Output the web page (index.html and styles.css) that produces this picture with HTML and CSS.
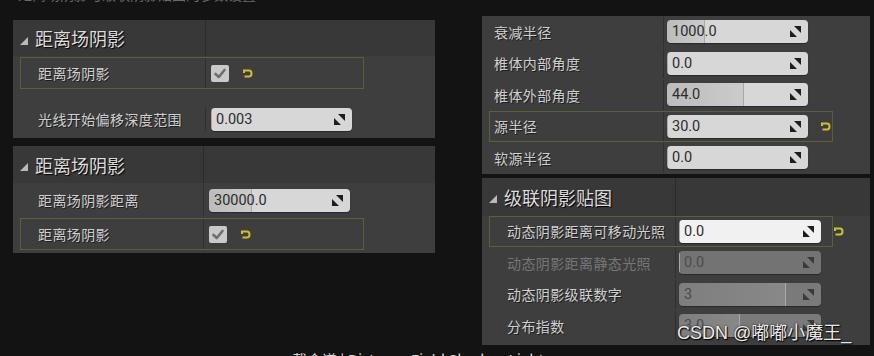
FILE: index.html
```html
<!DOCTYPE html>
<html lang="zh">
<head>
<meta charset="utf-8">
<title>距离场阴影</title>
<link rel="stylesheet" href="styles.css">
</head>
<body>
<div class="topcap"><span>距离场阴影与级联阴影贴图的参数设置</span></div>
<main class="layout">
  <section class="col col-left">
    <div class="panel pl1">
      <div class="hdr"><div class="hdr-name"><svg class="tri" width="8" height="8" viewBox="0 0 8 8"><polygon points="8,0 8,8 0,8"/></svg>距离场阴影</div></div>
      <div class="row">
        <div class="cell hl">
          <div class="lbl">距离场阴影</div>
          <div class="val">
            <span class="chk"><svg width="18" height="17" viewBox="0 0 18 17"><path d="M4.5 9 L7.8 12 L13.5 5" /></svg></span>
            <span class="reset"><svg width="11" height="11" viewBox="0 0 11 11"><path d="M2 5 V2.5 H7 Q9.5 2.5 9.5 5.5 Q9.5 8.5 7 8.5 H2.5"/></svg></span>
          </div>
        </div>
      </div>
      <div class="row row-tall">
        <div class="cell">
          <div class="lbl">光线开始偏移深度范围</div>
          <div class="val">
            <div class="num"><span class="num-t">0.003</span><svg class="spin" width="11" height="11" viewBox="0 0 11 11"><polygon points="4,0 11,0 11,7"/><polygon points="0,4 0,11 7,11"/></svg></div>
          </div>
        </div>
      </div>
    </div>

    <div class="panel pl2">
      <div class="hdr"><div class="hdr-name"><svg class="tri" width="8" height="8" viewBox="0 0 8 8"><polygon points="8,0 8,8 0,8"/></svg>距离场阴影</div></div>
      <div class="row">
        <div class="cell">
          <div class="lbl">距离场阴影距离</div>
          <div class="val">
            <div class="num" style="--fill:42px"><span class="num-t">30000.0</span><svg class="spin" width="11" height="11" viewBox="0 0 11 11"><polygon points="4,0 11,0 11,7"/><polygon points="0,4 0,11 7,11"/></svg></div>
          </div>
        </div>
      </div>
      <div class="row">
        <div class="cell hl">
          <div class="lbl">距离场阴影</div>
          <div class="val">
            <span class="chk"><svg width="18" height="17" viewBox="0 0 18 17"><path d="M4.5 9 L7.8 12 L13.5 5" /></svg></span>
            <span class="reset"><svg width="11" height="11" viewBox="0 0 11 11"><path d="M2 5 V2.5 H7 Q9.5 2.5 9.5 5.5 Q9.5 8.5 7 8.5 H2.5"/></svg></span>
          </div>
        </div>
      </div>
    </div>
  </section>

  <section class="col col-right">
    <div class="panel pr1">
      <div class="row">
        <div class="cell">
          <div class="lbl">衰减半径</div>
          <div class="val"><div class="num" style="--fill:37px"><span class="num-t">1000.0</span><svg class="spin" width="11" height="11" viewBox="0 0 11 11"><polygon points="4,0 11,0 11,7"/><polygon points="0,4 0,11 7,11"/></svg></div></div>
        </div>
      </div>
      <div class="row">
        <div class="cell">
          <div class="lbl">椎体内部角度</div>
          <div class="val"><div class="num"><span class="num-t">0.0</span><svg class="spin" width="11" height="11" viewBox="0 0 11 11"><polygon points="4,0 11,0 11,7"/><polygon points="0,4 0,11 7,11"/></svg></div></div>
        </div>
      </div>
      <div class="row">
        <div class="cell">
          <div class="lbl">椎体外部角度</div>
          <div class="val"><div class="num" style="--fill:76px"><span class="num-t">44.0</span><svg class="spin" width="11" height="11" viewBox="0 0 11 11"><polygon points="4,0 11,0 11,7"/><polygon points="0,4 0,11 7,11"/></svg></div></div>
        </div>
      </div>
      <div class="row">
        <div class="cell hl">
          <div class="lbl">源半径</div>
          <div class="val">
            <div class="num"><span class="num-t">30.0</span><svg class="spin" width="11" height="11" viewBox="0 0 11 11"><polygon points="4,0 11,0 11,7"/><polygon points="0,4 0,11 7,11"/></svg></div>
            <span class="reset"><svg width="11" height="11" viewBox="0 0 11 11"><path d="M2 5 V2.5 H7 Q9.5 2.5 9.5 5.5 Q9.5 8.5 7 8.5 H2.5"/></svg></span>
          </div>
        </div>
      </div>
      <div class="row">
        <div class="cell">
          <div class="lbl">软源半径</div>
          <div class="val"><div class="num"><span class="num-t">0.0</span><svg class="spin" width="11" height="11" viewBox="0 0 11 11"><polygon points="4,0 11,0 11,7"/><polygon points="0,4 0,11 7,11"/></svg></div></div>
        </div>
      </div>
    </div>

    <div class="panel pr2">
      <div class="hdr"><div class="hdr-name"><svg class="tri" width="8" height="8" viewBox="0 0 8 8"><polygon points="8,0 8,8 0,8"/></svg>级联阴影贴图</div></div>
      <div class="row">
        <div class="cell hl">
          <div class="lbl">动态阴影距离可移动光照</div>
          <div class="val">
            <div class="num foc"><span class="num-t">0.0</span><svg class="spin" width="11" height="11" viewBox="0 0 11 11"><polygon points="4,0 11,0 11,7"/><polygon points="0,4 0,11 7,11"/></svg></div>
            <span class="reset"><svg width="11" height="11" viewBox="0 0 11 11"><path d="M2 5 V2.5 H7 Q9.5 2.5 9.5 5.5 Q9.5 8.5 7 8.5 H2.5"/></svg></span>
          </div>
        </div>
      </div>
      <div class="row">
        <div class="cell">
          <div class="lbl dim">动态阴影距离静态光照</div>
          <div class="val"><div class="num dis dis-dark"><span class="num-t">0.0</span><svg class="spin" width="11" height="11" viewBox="0 0 11 11"><polygon points="4,0 11,0 11,7"/><polygon points="0,4 0,11 7,11"/></svg></div></div>
        </div>
      </div>
      <div class="row">
        <div class="cell">
          <div class="lbl">动态阴影级联数字</div>
          <div class="val"><div class="num dis" style="--fill:106px"><span class="num-t">3</span><svg class="spin" width="11" height="11" viewBox="0 0 11 11"><polygon points="4,0 11,0 11,7"/><polygon points="0,4 0,11 7,11"/></svg></div></div>
        </div>
      </div>
      <div class="row">
        <div class="cell">
          <div class="lbl">分布指数</div>
          <div class="val"><div class="num dis" style="--fill:60px"><span class="num-t">3.0</span><svg class="spin" width="11" height="11" viewBox="0 0 11 11"><polygon points="4,0 11,0 11,7"/><polygon points="0,4 0,11 7,11"/></svg></div></div>
        </div>
      </div>
    </div>
  </section>
</main>
<div class="botcap">载金谱 | Distance Field Shadow Light</div>
<div class="watermark">CSDN @嘟嘟小魔王_</div>
</body>
</html>
```

FILE: styles.css
```css
html, body {
  margin: 0;
  padding: 0;
}
body {
  width: 874px;
  height: 356px;
  overflow: hidden;
  background: #131313;
  font-family: "Noto Sans CJK SC", "Noto Sans", sans-serif;
  color: #cfcfcf;
  position: relative;
}

.topcap {
  height: 2px;
  overflow: hidden;
  padding-left: 18px;
}
.topcap span {
  display: block;
  margin-top: -13px;
  font-size: 14px;
  line-height: 15px;
  color: #6a6a6a;
}

.layout {
  display: flex;
  gap: 47px;
  padding-left: 13px;
}
.col {
  display: flex;
  flex-direction: column;
}
.col-left {
  width: 422px;
  padding-top: 18px;
  gap: 8px;
}
.col-right {
  width: 388px;
  padding-top: 14px;
  gap: 4px;
}

.panel {
  background: #3e3e3e;
  --lw: 184px;
  --lp: 17px;
  --vp: 5px;
  --hh: 36px;
  --rh: 34px;
}
.pl1 { --hh: 36px; }
.pl2 { --lw: 182px; --hh: 37px; padding-bottom: 2px; }
.pr1 { --lw: 173px; --lp: 4px; --vp: 3px; --rh: 31.5px; }
.pr2 { --lw: 185px; --lp: 17px; --vp: 3px; --hh: 38px; --rh: 31.5px; padding-bottom: 3px; }

.hdr {
  height: var(--hh);
  background: #383838;
  display: flex;
}
.hdr-name {
  box-sizing: border-box;
  width: calc(var(--lw) + 9px);
  border-right: 1px solid #2b2b2b;
  display: flex;
  align-items: center;
  padding-left: 7px;
  font-size: 18px;
  color: #dcdcdc;
  text-shadow: 1px 1px 1px #000;
}
.tri {
  fill: #b9b9b9;
  margin-right: 7px;
  margin-top: 5px;
}

.row {
  height: var(--rh);
  box-sizing: border-box;
  padding: 1px 0;
  display: flex;
}
.pr1 .row, .pr2 .row { padding: 0; }
.row-tall {
  height: 48px;
  padding: 16px 0 6px;
}

.cell {
  box-sizing: border-box;
  width: 344px;
  flex-shrink: 0;
  margin-left: 7px;
  border: 1px solid transparent;
  display: flex;
  align-items: center;
}
.cell.hl {
  border-color: #56633a;
}

.lbl {
  box-sizing: border-box;
  width: calc(var(--lw) + 1px);
  flex-shrink: 0;
  align-self: stretch;
  display: flex;
  align-items: center;
  padding-left: var(--lp);
  border-right: 1px solid #2f2f2f;
  font-size: 14px;
  letter-spacing: 0.4px;
  color: #d0d0d0;
  text-shadow: 1px 1px 0 rgba(0,0,0,0.55);
  white-space: nowrap;
}
.lbl.dim {
  color: #767676;
  text-shadow: none;
}

.val {
  flex: 1;
  min-width: 0;
  display: flex;
  align-items: center;
  padding-left: var(--vp);
}

.chk {
  width: 18px;
  height: 17px;
  flex-shrink: 0;
  border-radius: 2px;
  background: #c9c9c9;
  display: block;
}
.chk svg {
  display: block;
  fill: none;
  stroke: #6e6e6e;
  stroke-width: 2.6;
  stroke-linecap: round;
  stroke-linejoin: round;
}
.reset {
  display: block;
  flex-shrink: 0;
  margin-left: 13px;
  height: 11px;
}
.val .num + .reset { margin-left: 12px; }
.reset svg {
  display: block;
  fill: none;
  stroke: #cbc22a;
  stroke-width: 2;
}

.num {
  --fill: 0px;
  --c1: #bcbcbc;
  --c2: #cbcbcb;
  --c3: #d7d7d7;
  width: 141px;
  height: 23px;
  flex-shrink: 0;
  border-radius: 4px;
  background: linear-gradient(to right, var(--c1) 0, var(--c2) var(--fill), #a9a9a9 var(--fill), #a9a9a9 calc(var(--fill) + 1px), var(--c3) calc(var(--fill) + 1px));
  display: flex;
  align-items: center;
  box-shadow: 0 1px 1px rgba(0,0,0,0.35);
}
.num-t {
  padding-left: 5px;
  font-family: Roboto, "Liberation Sans", sans-serif;
  font-size: 14.5px;
  color: #2c2c2c;
}
.spin {
  margin-left: auto;
  margin-right: 7px;
  fill: #1e1e1e;
}
.num.foc {
  --c1: #f1f1f1;
  --c2: #f1f1f1;
  --c3: #f1f1f1;
  width: 142px;
}
.num.dis {
  --c1: #7e7e7e;
  --c2: #888888;
  --c3: #7a7a7a;
  width: 142px;
}
.num.dis .num-t { color: #4c4c4c; }
.num.dis .spin { fill: #3a3a3a; }
.num.dis-dark {
  --c1: #737373;
  --c2: #737373;
  --c3: #737373;
}

.botcap {
  margin-top: 6px;
  padding-left: 292px;
  font-size: 15px;
  line-height: 18px;
  color: #d2d2d2;
  white-space: nowrap;
}

.watermark {
  position: absolute;
  left: 677px;
  top: 321px;
  font-family: "Liberation Sans", "Noto Sans CJK SC", sans-serif;
  font-size: 18px;
  line-height: 24px;
  color: #ececec;
  text-shadow: 0 0 2px #000, 1px 1px 1px #000;
  white-space: nowrap;
}
```
